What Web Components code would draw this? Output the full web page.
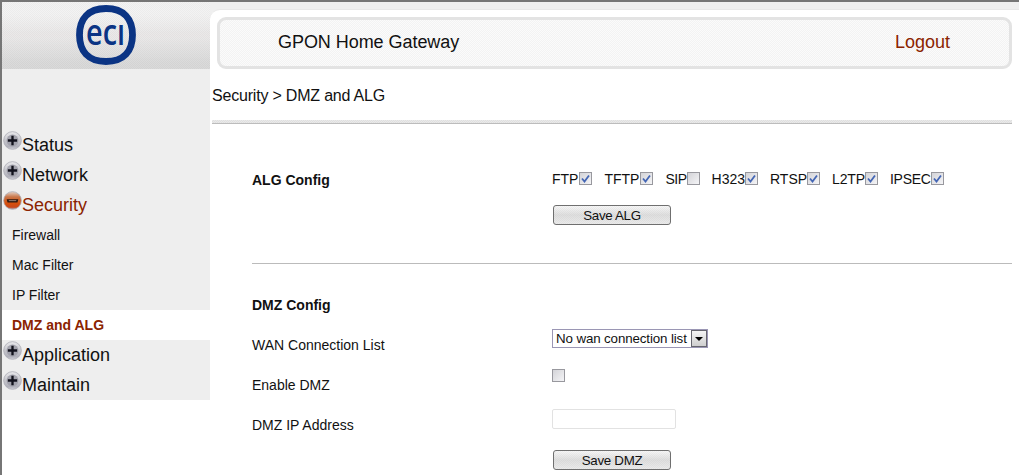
<!DOCTYPE html>
<html>
<head>
<meta charset="utf-8">
<title>GPON Home Gateway</title>
<style>
  html, body { margin: 0; padding: 0; background: #fff; overflow: hidden; }
  body { font-family: "Liberation Sans", Arial, sans-serif; color: #111; }
</style>
</head>
<body>
<gw-shell>
  <gw-sidebar slot="side">
    <gw-nav-item>Status</gw-nav-item>
    <gw-nav-item>Network</gw-nav-item>
    <gw-nav-item active>Security</gw-nav-item>
    <gw-sub-item>Firewall</gw-sub-item>
    <gw-sub-item>Mac Filter</gw-sub-item>
    <gw-sub-item>IP Filter</gw-sub-item>
    <gw-sub-item active>DMZ and ALG</gw-sub-item>
    <gw-nav-item>Application</gw-nav-item>
    <gw-nav-item>Maintain</gw-nav-item>
  </gw-sidebar>

  <gw-topbar title="GPON Home Gateway" action="Logout"></gw-topbar>
  <gw-crumb>Security &gt; DMZ and ALG</gw-crumb>

  <gw-section heading="ALG Config" first>
    <gw-alg-list>
      <gw-check checked spaced>FTP</gw-check>
      <gw-check checked spaced>TFTP</gw-check>
      <gw-check style="letter-spacing:-.5px">SIP</gw-check>
      <gw-check checked>H323</gw-check>
      <gw-check checked>RTSP</gw-check>
      <gw-check checked style="letter-spacing:-.15px">L2TP</gw-check>
      <gw-check checked style="letter-spacing:-.25px">IPSEC</gw-check>
    </gw-alg-list>
    <gw-button slot="after">Save ALG</gw-button>
  </gw-section>

  <gw-section heading="DMZ Config">
    <gw-row label="WAN Connection List"><gw-select>No wan connection list</gw-select></gw-row>
    <gw-row label="Enable DMZ"><gw-check></gw-check></gw-row>
    <gw-row label="DMZ IP Address"><gw-textbox></gw-textbox></gw-row>
    <gw-button slot="after">Save DMZ</gw-button>
  </gw-section>
</gw-shell>

<script>
// 2x2 checker tile, the old theme images are all dithered
function dither(a, b) {
    const svg = `<svg xmlns='http://www.w3.org/2000/svg' width='2' height='2' shape-rendering='crispEdges'><rect width='2' height='2' fill='${a}'/><rect width='1' height='1' fill='${b}'/><rect x='1' y='1' width='1' height='1' fill='${b}'/></svg>`;
    return `url("data:image/svg+xml,${encodeURIComponent(svg)}")`;
}
const HEADER_BG = "linear-gradient(#efefef 0, #efefef 12px, #e3e1e1 30px, #e2e0e0 36px, #cdcdcd 60px, #cbcbcb 67px)";
const SOFT_DITHER = dither("rgba(255,255,255,.28)", "rgba(0,0,0,.03)");

class GwShell extends HTMLElement {
    constructor() {
        super();
        this.attachShadow({ mode: "open" }).innerHTML = `
            <style>
                :host {
                    display: flex;
                    height: 473px;
                    border-top: 2px solid #767676;
                    border-left: 2px solid #767676;
                    overflow: hidden;
                }
                .side { flex: 0 0 208px; }
                .main {
                    flex: 1;
                    padding-top: 7px;
                    background: ${HEADER_BG} no-repeat 0 0/100% 67px;
                }
                .strip {
                    height: 100%;
                    box-sizing: border-box;
                    padding-top: 7px;
                    background: #fff;
                    border-top: 1px solid #e8e8e8;
                    border-top-left-radius: 10px;
                }
            </style>
            <div class="side"><slot name="side"></slot></div>
            <div class="main"><div class="strip"><slot></slot></div></div>
        `;
    }
}

class GwSidebar extends HTMLElement {
    constructor() {
        super();
        this.attachShadow({ mode: "open" }).innerHTML = `
            <style>
                :host { display: block; }
                header {
                    height: 67px;
                    display: flex;
                    justify-content: center;
                    background: ${SOFT_DITHER}, ${HEADER_BG};
                }
                svg { margin: 3px 0 0 0; }
                text { font-family: "Open Sans", sans-serif; font-size: 36px; font-weight: 600; fill: #0b3484; }
                .gap { height: 61px; background: #eee; }
                nav { background: #eee; }
            </style>
            <header>
                <svg width="60" height="60" viewBox="0 0 60 60" role="img" aria-label="eci">
                    <path d="M30 3.5C48 3.5 56.5 14 56.5 30S48 56.5 30 56.5S3.5 46 3.5 30S12 3.5 30 3.5Z" fill="none" stroke="#0b3484" stroke-width="6.8"/>
                    <text x="10" y="40" textLength="39" lengthAdjust="spacingAndGlyphs">ecı</text>
                </svg>
            </header>
            <div class="gap"></div>
            <nav><slot></slot></nav>
        `;
    }
}

class GwNavItem extends HTMLElement {
    constructor() {
        super();
        const active = this.hasAttribute("active");
        const stops = active
            ? `<stop offset="0" stop-color="#e4d4ca"/><stop offset=".3" stop-color="#c8764a"/><stop offset=".65" stop-color="#d8500c"/><stop offset=".88" stop-color="#c8481c"/><stop offset="1" stop-color="#b4b0c0"/>`
            : `<stop offset="0" stop-color="#e9e9ec"/><stop offset=".5" stop-color="#c6c6cc"/><stop offset=".85" stop-color="#b0b0ba"/><stop offset="1" stop-color="#d6d6dc"/>`;
        const mark = active
            ? `<path d="M3.5 7.8h11l-.8 3h-9.4z" fill="#2e1810"/><path d="M5.5 8.6h7v1h-7z" fill="#8f7b70"/>`
            : `<circle cx="9" cy="9" r="5.6" fill="#a2a2ac"/><path d="M7.9 4.6h2.2v3.3h3.3v2.2h-3.3v3.3h-2.2v-3.3h-3.3v-2.2h3.3z" fill="#12121c"/>`;
        this.attachShadow({ mode: "open" }).innerHTML = `
            <style>
                :host {
                    display: flex;
                    height: 30px;
                    background: #eee;
                    font-size: 18px;
                    padding-left: 1px;
                    color: ${active ? "#8b2300" : "#111"};
                }
                svg { flex: none; margin-top: 1px; }
                span { line-height: 30px; }
            </style>
            <svg width="19" height="19" viewBox="0 0 18 18">
                <defs><linearGradient id="ball" x1="0" y1="0" x2="0" y2="1">${stops}</linearGradient></defs>
                <circle cx="9" cy="9" r="8.4" fill="url(#ball)" stroke="#a8a8b2" stroke-width=".7"/>
                ${mark}
            </svg>
            <span><slot></slot></span>
        `;
    }
}

class GwSubItem extends HTMLElement {
    constructor() {
        super();
        const active = this.hasAttribute("active");
        this.attachShadow({ mode: "open" }).innerHTML = `
            <style>
                :host {
                    display: block;
                    height: 30px;
                    line-height: 30px;
                    padding-left: 10px;
                    font-size: 14px;
                    background: ${active ? "#fff" : "#eee"};
                    color: ${active ? "#8b2300" : "#111"};
                    font-weight: ${active ? "bold" : "normal"};
                }
            </style>
            <slot></slot>
        `;
    }
}

class GwTopbar extends HTMLElement {
    constructor() {
        super();
        this.attachShadow({ mode: "open" }).innerHTML = `
            <style>
                :host {
                    display: flex;
                    justify-content: space-between;
                    align-items: center;
                    box-sizing: border-box;
                    height: 52px;
                    margin: 0 7px;
                    padding: 0 59px 2px 58px;
                    border: 3px solid #e3e3e3;
                    border-radius: 9px;
                    font-size: 18px;
                    background: ${dither("#f3f3f3", "#fbfbfb")};
                }
                span { letter-spacing: -.05px; }
                a { color: #8b2300; text-decoration: none; }
            </style>
            <span>${this.getAttribute("title")}</span>
            <a href="#">${this.getAttribute("action")}</a>
        `;
    }
}

class GwCrumb extends HTMLElement {
    constructor() {
        super();
        this.attachShadow({ mode: "open" }).innerHTML = `
            <style>
                :host { display: block; font-size: 16px; }
                div { height: 49px; line-height: 49px; padding: 2px 0 0 2px; letter-spacing: -.2px; }
                hr {
                    height: 4px;
                    margin: 0 7px 0 2px;
                    border: 0;
                    background: linear-gradient(transparent 3px, #bcbcbc 3px), ${dither("#e0e0e0", "#eaeaea")};
                }
            </style>
            <div><slot></slot></div>
            <hr>
        `;
    }
}

class GwSection extends HTMLElement {
    constructor() {
        super();
        const first = this.hasAttribute("first");
        this.attachShadow({ mode: "open" }).innerHTML = `
            <style>
                :host {
                    display: block;
                    margin: 0 7px 0 42px;
                    font-size: 14px;
                    ${first ? "padding-top: 35px;" : ""}
                }
                .head { font-weight: bold; line-height: 40px; }
                .wrap { display: grid; grid-template-columns: 300px 1fr; align-items: center; height: 40px; }
                .wrap .head { margin-top: 1px; }
                .after { padding-left: 301px; display: block; margin-top: ${first ? "6px" : "5px"}; }
                hr { height: 1px; border: 0; margin: 38px 0 21px; background: #bbb; }
            </style>
            ${first
                ? `<div class="wrap"><div class="head">${this.getAttribute("heading")}</div><div><slot></slot></div></div>`
                : `<div class="head">${this.getAttribute("heading")}</div><slot></slot>`}
            <div class="after"><slot name="after"></slot></div>
            ${first ? "<hr>" : ""}
        `;
    }
}

class GwAlgList extends HTMLElement {
    constructor() {
        super();
        this.attachShadow({ mode: "open" }).innerHTML = `
            <style>:host { display: flex; gap: 12px; align-items: center; margin-top: -1px; }</style>
            <slot></slot>
        `;
    }
}

class GwRow extends HTMLElement {
    constructor() {
        super();
        this.attachShadow({ mode: "open" }).innerHTML = `
            <style>
                :host { display: grid; grid-template-columns: 300px 1fr; height: 40px; }
                .label { line-height: 40px; }
                .value { padding-top: 4px; }
            </style>
            <div class="label">${this.getAttribute("label")}</div>
            <div class="value"><slot></slot></div>
        `;
    }
}

class GwCheck extends HTMLElement {
    constructor() {
        super();
        const tick = this.hasAttribute("checked")
            ? `<path d="M3 6.5l2.5 3L10 3.5" fill="none" stroke="#4466b4" stroke-width="1.8"/>`
            : "";
        this.attachShadow({ mode: "open" }).innerHTML = `
            <style>
                :host { display: inline-flex; align-items: center; gap: 0; }
                :host([spaced]) { gap: 1px; }
                :host(:empty) { margin-top: 1px; }
                svg { display: block; flex: none; margin-top: -1px; }
            </style>
            <slot></slot>
            <svg width="13" height="13" viewBox="0 0 13 13">
                <defs><linearGradient id="box" x1="0" y1="0" x2="1" y2="1"><stop offset="0" stop-color="#d2d2d6"/><stop offset="1" stop-color="#f6f6f8"/></linearGradient></defs>
                <rect x=".5" y=".5" width="12" height="12" fill="url(#box)" stroke="#98989e"/>
                ${tick}
            </svg>
        `;
    }
}

class GwButton extends HTMLElement {
    constructor() {
        super();
        this.attachShadow({ mode: "open" }).innerHTML = `
            <style>
                :host { display: block; }
                button {
                    display: block;
                    box-sizing: border-box;
                    width: 118px;
                    height: 20px;
                    padding: 0;
                    border: 1px solid #6f6f6f;
                    border-radius: 3px;
                    font: 13.33px "Liberation Sans", Arial, sans-serif;
                    letter-spacing: -.3px;
                    color: #111;
                    background: ${SOFT_DITHER}, linear-gradient(#f4f4f4, #d2d2d2 50%, #e4e4e4);
                }
            </style>
            <button><slot></slot></button>
        `;
    }
}

class GwSelect extends HTMLElement {
    constructor() {
        super();
        this.attachShadow({ mode: "open" }).innerHTML = `
            <style>
                :host { display: block; position: relative; width: 156px; height: 19px; }
                select {
                    appearance: none;
                    display: block;
                    box-sizing: border-box;
                    width: 100%;
                    height: 100%;
                    padding: 0 0 0 3px;
                    border: 1px solid #9a96b4;
                    border-radius: 0;
                    background: #fff;
                    color: #111;
                    font: 13.33px "Liberation Sans", Arial, sans-serif;
                    letter-spacing: -.12px;
                }
                .arrow {
                    position: absolute;
                    top: 1px;
                    right: 1px;
                    width: 14px;
                    height: 15px;
                    border: 1px solid #66666e;
                    background: linear-gradient(#f4f4f4, #cfcfcf);
                    display: flex;
                    align-items: center;
                    justify-content: center;
                }
                .arrow i { width: 0; height: 0; border: 4px solid transparent; border-top-color: #000; border-bottom: 0; }
            </style>
            <select><option>${this.textContent}</option></select>
            <span class="arrow"><i></i></span>
        `;
    }
}

class GwTextbox extends HTMLElement {
    constructor() {
        super();
        this.attachShadow({ mode: "open" }).innerHTML = `
            <style>
                :host { display: block; }
                input {
                    display: block;
                    box-sizing: border-box;
                    width: 124px;
                    height: 20px;
                    padding: 0 2px;
                    border: 1px solid #e2e2e2;
                    border-radius: 2px;
                    outline: 0;
                    background: #fff;
                }
            </style>
            <input type="text">
        `;
    }
}

customElements.define("gw-shell", GwShell);
customElements.define("gw-sidebar", GwSidebar);
customElements.define("gw-nav-item", GwNavItem);
customElements.define("gw-sub-item", GwSubItem);
customElements.define("gw-topbar", GwTopbar);
customElements.define("gw-crumb", GwCrumb);
customElements.define("gw-section", GwSection);
customElements.define("gw-alg-list", GwAlgList);
customElements.define("gw-row", GwRow);
customElements.define("gw-check", GwCheck);
customElements.define("gw-button", GwButton);
customElements.define("gw-select", GwSelect);
customElements.define("gw-textbox", GwTextbox);
</script>
</body>
</html>
